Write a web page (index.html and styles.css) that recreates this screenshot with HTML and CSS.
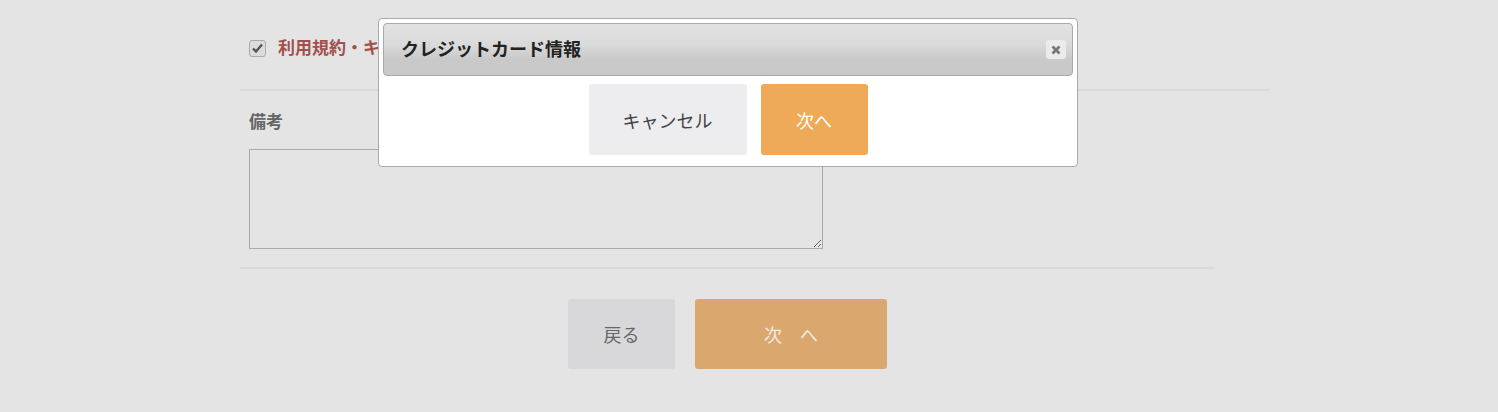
FILE: index.html
```html
<!DOCTYPE html>
<html lang="ja">

<head>
    <title>お申し込み</title>
    <meta charset="utf-8">
    <meta name="viewport" content="width=device-width, initial-scale=1">
    <link rel="stylesheet" href="styles.css">
</head>

<body>
    <main class="form">
        <div class="agree">
            <label class="agree-label">
                <span class="check">
                    <svg width="11" height="10" viewBox="0 0 11 10">
                        <path d="M1 5.5 L4 8.5 L10 1.5" fill="none" stroke="#555" stroke-width="2.4" />
                    </svg>
                </span>
                <span class="agree-text">利用規約・キャンセルポリシーに同意する</span>
            </label>
        </div>

        <div class="note">
            <div class="note-title">備考</div>
            <textarea class="note-input"></textarea>
        </div>

        <div class="actions">
            <button class="btn btn-back">戻る</button>
            <button class="btn btn-next">次　へ</button>
        </div>
    </main>

    <!-- Dialog -->
    <div class="dialog">
        <div class="dialog-title">
            <span>クレジットカード情報</span>
            <span class="dialog-close">
                <svg width="10" height="10" viewBox="0 0 10 10">
                    <path d="M1.5 1.5 L8.5 8.5 M8.5 1.5 L1.5 8.5" stroke="#777" stroke-width="2.8" />
                </svg>
            </span>
        </div>
        <div class="dialog-buttons">
            <button class="dbtn dbtn-cancel">キャンセル</button>
            <button class="dbtn dbtn-next">次へ</button>
        </div>
    </div>
</body>

</html>
```

FILE: styles.css
```css
* {
    box-sizing: border-box;
}

body {
    margin: 0;
    background: #e4e4e4;
    font-family: "Noto Sans CJK JP", "Noto Sans", sans-serif;
    color: #555;
}

/* Page form */
.form {
    width: 1030px;
    margin-left: 240px;
    padding-top: 39px;
}

.agree {
    padding: 0 0 32px 9px;
    border-bottom: 2px solid #d9d9d9;
}

.agree-label {
    display: flex;
    align-items: center;
    gap: 12px;
}

.check {
    width: 17px;
    height: 17px;
    border: 1px solid #aaa;
    border-radius: 3px;
    background: #dcdcdc;
    display: flex;
    align-items: center;
    justify-content: center;
}

/* the rest of the label sits under the dialog */
.agree-text {
    width: 100px;
    overflow: hidden;
    white-space: nowrap;
    font-size: 17px;
    font-weight: bold;
    color: #a3504d;
    line-height: 20px;
    margin-top: -2px;
}

.note {
    width: 975px;
    padding: 19px 0 18px 9px;
    border-bottom: 2px solid #d9d9d9;
}

.note-title {
    font-size: 17px;
    font-weight: bold;
    color: #666;
    line-height: 22px;
    margin-bottom: 17px;
}

.note-input {
    display: block;
    width: 574px;
    height: 100px;
    margin: 0;
    border: 1px solid #aaa;
    background: #e4e4e4;
    resize: vertical;
}

.actions {
    width: 975px;
    display: flex;
    justify-content: center;
    gap: 20px;
    padding-top: 30px;
}

.btn {
    height: 70px;
    border: none;
    border-radius: 3px;
    font-family: inherit;
    font-size: 18px;
}

.btn-back {
    width: 107px;
    background: #d8d8da;
    color: #666;
}

.btn-next {
    width: 192px;
    background: #daa86e;
    color: #f3ebe2;
}

/* Dialog */
.dialog {
    position: absolute;
    left: 378px;
    top: 18px;
    width: 700px;
    height: 149px;
    background: #fff;
    border: 1px solid #aaa;
    border-radius: 4px;
    padding: 4px;
}

.dialog-title {
    height: 53px;
    border: 1px solid #aaa;
    border-radius: 4px;
    background: linear-gradient(#e2e2e2, #dadada 40%, #c9c9c9 70%, #c8c8c8);
    display: flex;
    align-items: center;
    justify-content: space-between;
    padding: 0 6px 4px 17px;
    font-size: 18px;
    font-weight: bold;
    color: #222;
}

.dialog-close {
    width: 20px;
    height: 19px;
    margin-top: 4px;
    border-radius: 3px;
    background: #ebebeb;
    display: flex;
    align-items: center;
    justify-content: center;
}

.dialog-buttons {
    display: flex;
    justify-content: center;
    gap: 14px;
    padding-top: 8px;
}

.dbtn {
    height: 71px;
    border: none;
    border-radius: 3px;
    font-family: inherit;
    font-size: 18px;
}

.dbtn-cancel {
    width: 158px;
    background: #ededef;
    color: #444;
}

.dbtn-next {
    width: 107px;
    background: #eeaa58;
    color: #fff;
}
```
